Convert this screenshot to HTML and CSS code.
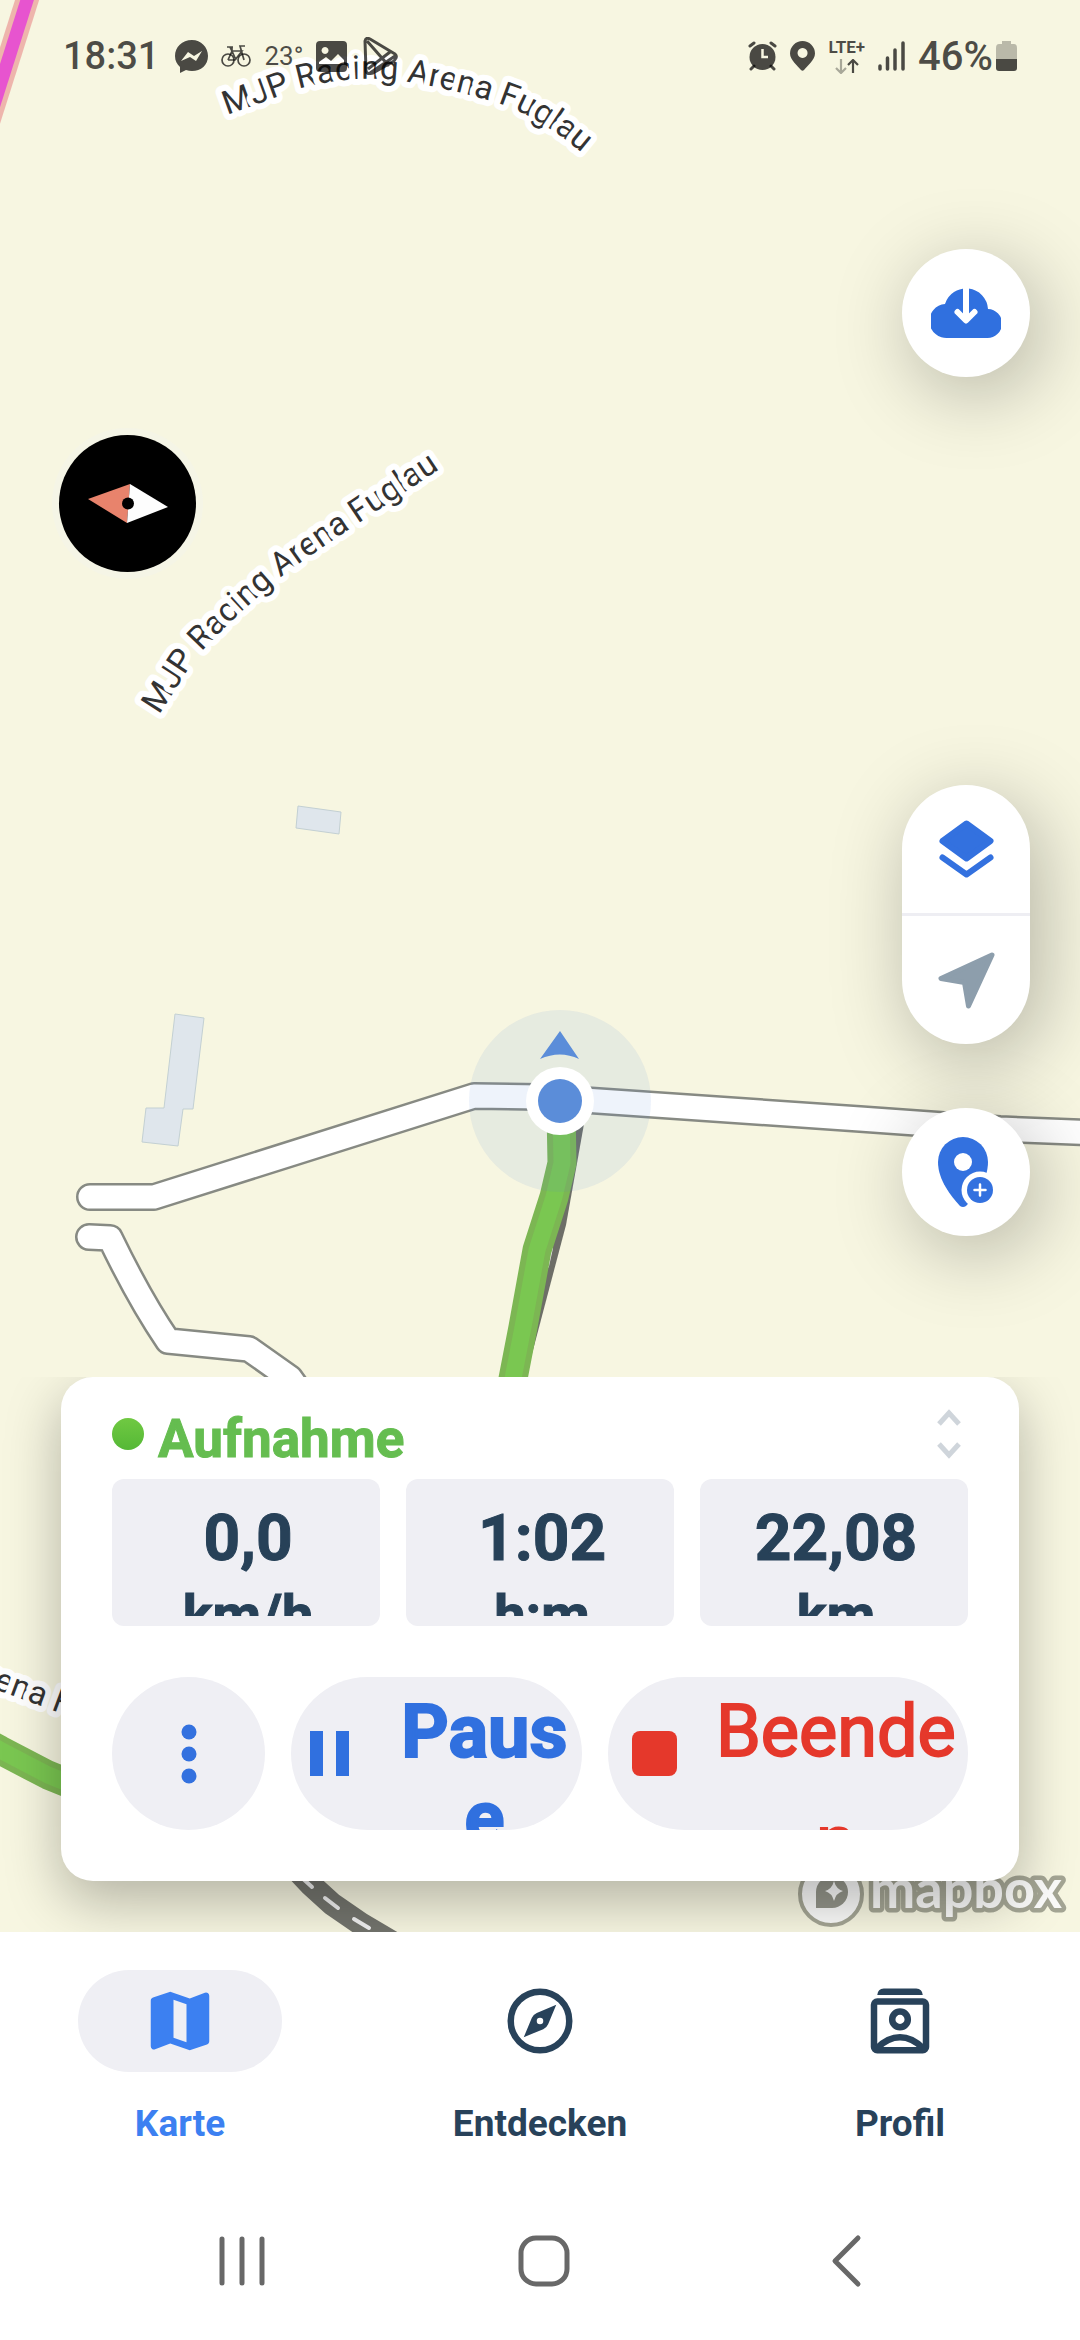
FILE: index.html
```html
<!DOCTYPE html>
<html lang="de">
<head>
    <meta charset="UTF-8">
    <meta name="viewport" content="width=device-width, initial-scale=1.0">
    <title>Karte</title>
    <link rel="stylesheet" href="styles.css">
</head>
<body>
    <div class="app">
        <main class="map">
            <svg class="map-canvas" viewBox="0 0 1080 1932" preserveAspectRatio="xMidYMin slice">
                <defs>
                    <path id="label-top" d="M227 115L302 88Q350 75 397 80Q448 88 494 102Q540 115 590 160"/>
                    <path id="label-mid" d="M159 715L186 673Q193 661 204 649Q240 611 281 577Q320 548 362 521L450 462"/>
                    <path id="label-low" d="M-38 1677L57 1712L200 1765"/>
                </defs>

                <!-- route in the corner -->
                <path class="route-glow" d="M34 -22L-14 130"/>
                <path class="route" d="M34 -22L-14 130"/>

                <!-- buildings -->
                <path class="building" d="M298 806L341 812L339 834L296 828Z"/>
                <path class="building" d="M175 1014L204 1018L193 1109H183L178 1146L142 1142L146 1108H164Z"/>

                <!-- roads -->
                <path class="road-case" d="M90 1197H154L474 1096L540 1097L860 1119L1000 1129L1100 1133"/>
                <path class="road" d="M90 1197H154L474 1096L540 1097L860 1119L1000 1129L1100 1133"/>
                <path class="road-case" d="M89 1237L110 1238Q140 1300 168 1341L249 1349L290 1378L320 1420"/>
                <path class="road" d="M89 1237L110 1238Q140 1300 168 1341L249 1349L290 1378L320 1420"/>
                <path class="track-dark" d="M584 1124L566 1225L537 1335L525 1380H500L560 1120Z"/>
                <path class="track-dash" d="M557 1226L555 1232M551 1248L547 1266"/>
                <path class="rail" d="M280 1852L310 1884L332 1904L361 1924L395 1944"/>
                <path class="rail-dash" d="M300 1876L312 1887M325 1898L338 1908M354 1919L369 1928"/>

                <!-- recorded track -->
                <path class="track-edge" d="M561 1110L562 1163L554 1197L537 1250L523 1327L505 1420"/>
                <path class="track" d="M561 1110L562 1163L554 1197L537 1250L523 1327L505 1420"/>
                <path class="track-edge" d="M-20 1739L0 1750L48 1775L90 1792"/>
                <path class="track" d="M-20 1739L0 1750L48 1775L90 1792"/>

                <text class="map-label"><textPath href="#label-top">MJP Racing Arena Fuglau</textPath></text>
                <text class="map-label"><textPath href="#label-mid">MJP Racing Arena Fuglau</textPath></text>
                <text class="map-label"><textPath href="#label-low">Arena Fuglau</textPath></text>

                <!-- own position -->
                <circle cx="560" cy="1101" r="91" fill="#5b8dd9" opacity=".1"/>
                <path d="M560 1031L579 1059Q560 1050 540 1059Z" fill="#5b8dd9"/>
                <circle cx="560" cy="1101" r="34" fill="#fff"/>
                <circle cx="560" cy="1101" r="22" fill="#5b8dd9"/>

                <!-- map logo -->
                <g class="logo">
                    <circle cx="831" cy="1894" r="31" fill="#fbfbfa" stroke="#a4a594" stroke-width="4"/>
                    <path d="M816 1908V1892A16 16 0 1 1 832 1908Z" fill="#94958a"/>
                    <path d="M834 1881Q836 1889 843 1891Q836 1893 834 1901Q832 1893 825 1891Q832 1889 834 1881Z" fill="#fbfbfa"/>
                    <text class="logo-text" x="870" y="1908">mapbox</text>
                </g>
            </svg>

            <div class="overlay">
                <header class="status">
                    <div class="status-group">
                        <span class="clock">18:31</span>
                        <svg width="33" height="33" viewBox="0 0 33 33"><path fill="currentColor" fill-rule="evenodd" d="M17 0C7 0 0 7 0 16c0 5 2 8 5 11v6l6-3c2 .6 4 1 6 1 9 0 16-6 16-15S26 0 17 0zM6 21l7-9 6 4 8-5-6 10-6-4z"/></svg>
                        <svg width="30" height="22" viewBox="0 0 30 22" fill="none" stroke="currentColor" stroke-width="1.7"><circle cx="7" cy="15" r="6"/><circle cx="23" cy="15" r="6"/><path d="M7 15L11 6H21L14 15H7M6 2H12M11 2V6L15 15M23 15L19 1H24M11 6L9 2"/></svg>
                        <span class="temperature">23°</span>
                        <svg width="31" height="31" viewBox="0 0 31 31"><path fill="currentColor" fill-rule="evenodd" d="M4 0H27Q31 0 31 4V27Q31 31 27 31H4Q0 31 0 27V4Q0 0 4 0ZM9 6a3.500 3.500 0 1 0 .1 0zM3 23H28V19L22 13L15 20L10 16L3 21z"/></svg>
                        <svg width="38" height="38" viewBox="0 0 38 38" fill="none" stroke="currentColor" stroke-width="3" stroke-linejoin="round"><path d="M5 4Q6 0 10 2L35 17Q37 19 36 21L34 24L13 36Q6 38 6 33ZM7 4L29 29M35 19L10 36M30 15L8 32"/></svg>
                    </div>
                    <div class="status-group">
                        <svg width="29" height="30" viewBox="0 0 29 30"><path fill="none" stroke="currentColor" stroke-width="3" stroke-linecap="round" d="M2 5L6 2M27 5L23 2M3 28L6 25M26 28L23 25"/><circle cx="14.500" cy="16" r="13" fill="currentColor"/><path d="M14.500 8V16H20" fill="none" stroke="#f7f6e1" stroke-width="2.500"/></svg>
                        <svg width="25" height="30" viewBox="0 0 25 30"><path fill="currentColor" fill-rule="evenodd" d="M12.500 0A12.500 12.500 0 0 0 0 12.500C0 19 8 25 11 29q1.500 1.500 3 0C17 25 25 19 25 12.500A12.500 12.500 0 0 0 12.500 0zM12.500 7a5 5 0 1 0 .1 0z"/></svg>
                        <span class="network">
                            <span>LTE+</span>
                            <svg width="24" height="15" viewBox="0 0 24 15" fill="none" stroke="currentColor" stroke-width="2.200"><path opacity=".45" d="M6 0V13M1 9L6 14L11 9"/><path d="M18 14V1M13 6L18 1L23 6"/></svg>
                        </span>
                        <svg width="27" height="30" viewBox="0 0 27 30" stroke="currentColor" stroke-width="3.500" stroke-linecap="round"><path d="M2 25V28M9.500 17V28M17 9V28M25 2V28"/></svg>
                        <span class="battery">
                            <span class="percent">46%</span>
                            <svg width="21" height="30" viewBox="0 0 21 30" fill="currentColor"><path opacity=".35" d="M6 0H15V3H18Q21 3 21 7V18H0V7Q0 3 3 3H6z"/><path d="M0 18H21V27Q21 30 18 30H3Q0 30 0 27z"/></svg>
                        </span>
                    </div>
                </header>

                <div class="tools">
                    <button type="button" class="compass" aria-label="Kompass">
                        <svg width="80" height="40" viewBox="0 0 80 40"><path fill="#e8836c" d="M0 15L42 0L39 39z"/><path fill="#fdfdfd" d="M42 0L80 23L39 39z"/><circle cx="40" cy="19.500" r="6"/></svg>
                    </button>
                    <div class="tool-column">
                        <button type="button" class="round-button download" aria-label="Offline speichern">
                            <svg width="70" height="52" viewBox="0 0 70 52"><path fill="#3070df" d="M17 51A17 17 0 0 1 14 17A22 22 0 0 1 57 22A14.500 14.500 0 0 1 56 51z"/><path fill="none" stroke="#fff" stroke-width="6" d="M35 -2V32"/><path fill="none" stroke="#fff" stroke-width="6" stroke-linecap="round" stroke-linejoin="round" d="M26.500 25L35 33.500L43.500 25"/></svg>
                        </button>
                        <div class="pill">
                            <button type="button" class="pill-button" aria-label="Ebenen">
                                <svg width="55" height="58" viewBox="0 0 55 58"><path fill="#3371df" stroke="#3371df" stroke-width="6" stroke-linejoin="round" d="M27.500 3.500L51.500 21L27.500 38.500L3.500 21z"/><path fill="none" stroke="#3371df" stroke-width="6" stroke-linecap="round" stroke-linejoin="round" d="M3.500 37.500L27.500 54.500L51.500 37.500"/></svg>
                            </button>
                            <button type="button" class="pill-button" aria-label="Position">
                                <svg width="57" height="57" viewBox="0 0 57 57"><path fill="#8d9eac" stroke="#8d9eac" stroke-width="5" stroke-linejoin="round" d="M54 3L3 26.500L26.500 30.500L30.500 54z"/></svg>
                            </button>
                        </div>
                        <button type="button" class="round-button" aria-label="Wegpunkt setzen">
                            <svg width="56" height="70" viewBox="0 0 56 70"><path fill="#3371df" d="M25 0A25 25 0 0 0 0 25C0 43 13 59 22 69q3 2 6 0C38 58 50 43 50 25A25 25 0 0 0 25 0z"/><circle cx="25" cy="25" r="9" fill="#fff"/><circle cx="42" cy="53" r="18.500" fill="#fff"/><circle cx="42" cy="53" r="13" fill="#3371df"/><path stroke="#fff" stroke-width="2.500" stroke-linecap="round" d="M42 47.500V58.500M36.500 53H47.500"/></svg>
                        </button>
                    </div>
                </div>

                <section class="recorder">
                    <div class="card">
                        <div class="card-head">
                            <span class="live-dot"></span>
                            <h1>Aufnahme</h1>
                            <button type="button" class="expand" aria-label="Ausklappen">
                                <svg width="26" height="50" viewBox="0 0 26 50" fill="none" stroke="#cfd5db" stroke-width="5"><path d="M3 15L13 4L23 15M3 35L13 46L23 35"/></svg>
                            </button>
                        </div>
                        <div class="stats">
                            <div class="stat"><div class="stat-text"><div class="value">0,0</div><div class="unit">km/h</div></div></div>
                            <div class="stat"><div class="stat-text"><div class="value">1:02</div><div class="unit">h:m</div></div></div>
                            <div class="stat"><div class="stat-text"><div class="value">22,08</div><div class="unit">km</div></div></div>
                        </div>
                        <div class="actions">
                            <button type="button" class="action more" aria-label="Mehr">
                                <svg width="16" height="60" viewBox="0 0 16 60" fill="#3371df"><circle cx="8" cy="8" r="7.500"/><circle cx="8" cy="30" r="7.500"/><circle cx="8" cy="52" r="7.500"/></svg>
                            </button>
                            <button type="button" class="action pause">
                                <svg width="39" height="45" viewBox="0 0 39 45" fill="#3070df"><path d="M0 0H13V45H0zM26 0H39V45H26z"/></svg>
                                <span>Pause</span>
                            </button>
                            <button type="button" class="action stop">
                                <svg width="45" height="45" viewBox="0 0 45 45" fill="#e5382b"><rect width="45" height="45" rx="8"/></svg>
                                <span>Beenden</span>
                            </button>
                        </div>
                    </div>
                </section>
            </div>
        </main>

        <nav class="tabs">
            <a href="#karte" class="tab active">
                <span class="tab-icon"><svg width="78" height="78" viewBox="0 0 24 24" fill="currentColor"><path d="m15 21-6-2.100-4.650 1.800q-.5.2-.925-.112Q3 20.275 3 19.750v-14q0-.325.188-.575.187-.25.512-.375L9 3l6 2.100 4.650-1.800q.5-.2.925.113.425.312.425.837v14q0 .325-.188.575-.187.25-.512.375Zm-1-2.450V6.850l-4-1.400v11.700Z"/></svg></span>
                Karte
            </a>
            <a href="#entdecken" class="tab">
                <span class="tab-icon"><svg width="78" height="78" viewBox="0 0 24 24"><circle cx="12" cy="12" r="9" fill="none" stroke="currentColor" stroke-width="2"/><path fill="currentColor" d="M17 7L11 9.500Q9.900 10 9.500 11L7 17L13 14.500Q14.100 14 14.500 13Z"/><circle cx="12" cy="12" r="1" fill="#fff"/></svg></span>
                Entdecken
            </a>
            <a href="#profil" class="tab">
                <span class="tab-icon"><svg width="78" height="78" viewBox="0 0 24 24"><path fill="currentColor" d="M5 4Q5.200 2 7 2H17Q18.800 2 19 4z"/><rect x="4" y="6" width="16" height="15" rx="1" fill="none" stroke="currentColor" stroke-width="2"/><circle cx="12" cy="11.500" r="2.400" fill="none" stroke="currentColor" stroke-width="2"/><path fill="none" stroke="currentColor" stroke-width="2" d="M5 20.300Q8.300 17 12 17T19 20.300"/></svg></span>
                Profil
            </a>
        </nav>

        <div class="system-bar">
            <button type="button" aria-label="Letzte Apps"><svg width="50" height="54" viewBox="0 0 50 54"><path d="M5 5V49M25 5V49M45 5V49"/></svg></button>
            <button type="button" aria-label="Startseite"><svg width="54" height="54" viewBox="0 0 54 54"><rect x="4" y="4" width="46" height="46" rx="15"/></svg></button>
            <button type="button" aria-label="Zurück"><svg width="34" height="54" viewBox="0 0 34 54"><path d="M29 4L6 27L29 50"/></svg></button>
        </div>
    </div>
</body>
</html>
```
FILE: styles.css
```css
* {
    box-sizing: border-box;
}

body {
    margin: 0;
    font-family: Roboto, "Liberation Sans", sans-serif;
    background-color: #fff;
    color: #28425a;
}

button {
    padding: 0;
    border: none;
    background: none;
    font-family: inherit;
    cursor: pointer;
}

svg {
    flex: none;
}

.app {
    display: flex;
    flex-direction: column;
    min-height: 100vh;
}

/* Map */
.map {
    position: relative;
    display: flex;
    flex: 1;
    overflow: hidden;
    background-color: #f7f6e1;
}

.map-canvas {
    position: absolute;
    inset: 0;
    width: 100%;
    height: 100%;
}

.map-canvas path {
    stroke-linejoin: round;
}

.route-glow {
    stroke: #eda6a0;
    stroke-width: 23;
    opacity: 0.8;
}

.route {
    stroke: #e754cf;
    stroke-width: 13;
}

.building {
    fill: #dfe6ec;
    stroke: #c3d0d3;
    stroke-width: 1;
}

.road-case,
.road,
.rail,
.rail-dash,
.track-edge,
.track,
.track-dash {
    fill: none;
    stroke-linecap: round;
}

.road-case {
    stroke: #878a83;
    stroke-width: 28;
}

.road {
    stroke: #fff;
    stroke-width: 23;
}

.track-dark {
    fill: #6d6e67;
}

.track-dash,
.rail-dash {
    stroke: #f0f0f0;
    stroke-width: 4;
}

.rail {
    stroke: #73746d;
    stroke-width: 23;
}

.track-edge {
    stroke: #7cb653;
    stroke-width: 29;
}

.track {
    stroke: #7ac751;
    stroke-width: 17;
}

.map-label {
    font-size: 33px;
    fill: #333;
    stroke: #fff;
    stroke-width: 12px;
    stroke-linejoin: round;
    paint-order: stroke;
}

.logo-text {
    font-family: Lato, sans-serif;
    font-size: 54px;
    font-weight: 700;
    fill: #fbfbfa;
    stroke: #a4a594;
    stroke-width: 9px;
    stroke-linejoin: round;
    paint-order: stroke;
}

.overlay {
    position: relative;
    display: flex;
    flex: 1;
    flex-direction: column;
}

/* Status bar */
.status {
    display: flex;
    justify-content: space-between;
    align-items: center;
    height: 112px;
    padding: 0 63px;
    color: rgba(0, 0, 0, 0.7);
}

.status-group {
    display: flex;
    align-items: center;
    gap: 13px;
}

.clock {
    margin-right: 3px;
    font-size: 38px;
    font-weight: 500;
}

.percent {
    margin-right: 3px;
    font-size: 40px;
    font-weight: 500;
}

.temperature {
    font-size: 26px;
}

.network {
    display: flex;
    flex-direction: column;
    align-items: center;
    gap: 4px;
    font-size: 17px;
    line-height: 16px;
    font-weight: 700;
}

.battery {
    display: flex;
    align-items: center;
}

/* Map buttons */
.tools {
    display: flex;
    justify-content: space-between;
    align-items: flex-start;
    padding: 137px 50px 0;
}

.compass {
    display: flex;
    justify-content: center;
    align-items: center;
    width: 137px;
    height: 137px;
    margin: 186px 9px 0;
    border-radius: 50%;
    background-color: #000;
    box-shadow: 0 0 0 7px #f5f5e6;
}

.tool-column {
    display: flex;
    flex-direction: column;
    gap: 64px;
}

.round-button,
.pill-button {
    display: flex;
    justify-content: center;
    align-items: center;
    width: 128px;
    height: 128px;
}

.round-button,
.pill {
    border-radius: 64px;
    background-color: #fff;
    box-shadow: 10px 16px 80px rgba(0, 0, 0, 0.28);
}

.download {
    margin-bottom: 344px;
}

.pill-button + .pill-button {
    height: 131px;
    border-top: 3px solid #eeeef3;
}

/* Recording card */
.recorder {
    margin-top: auto;
    padding: 0 61px 51px;
    overflow: hidden;
}

.card {
    padding: 26px 51px 51px;
    border-radius: 32px;
    background-color: #fff;
    box-shadow: 0 20px 56px rgba(0, 0, 0, 0.28);
}

.card-head {
    display: flex;
    align-items: center;
    height: 72px;
    margin-bottom: 4px;
}

.live-dot {
    width: 32px;
    height: 32px;
    margin: 0 14px 10px 0;
    border-radius: 50%;
    background: linear-gradient(#70c942, #55b836);
}

h1 {
    margin: 0;
    color: #65bd50;
    font-size: 53px;
    font-weight: 700;
    line-height: 64px;
    -webkit-text-stroke: 1px currentColor;
}

.expand {
    margin: 0 6px 10px auto;
}

.expand svg {
    display: block;
}

.stats {
    display: grid;
    grid-template-columns: repeat(3, 1fr);
    gap: 26px;
}

/* the unit line is cut off by the tile */
.stat {
    height: 147px;
    padding: 22px 8px 10px 12px;
    border-radius: 12px;
    background-color: #efeff4;
    color: #274158;
    font-weight: 700;
    text-align: center;
    -webkit-text-stroke: 1px currentColor;
}

.stat-text {
    height: 100%;
    overflow: hidden;
}

.value {
    font-size: 64px;
    line-height: 76px;
}

.unit {
    font-size: 56px;
    line-height: 76px;
}

.actions {
    display: flex;
    gap: 26px;
    margin-top: 51px;
}

.action {
    display: flex;
    align-items: center;
    height: 153px;
    border-radius: 77px;
    background-color: #efeff4;
    overflow: hidden;
}

.action span {
    flex: 1;
    align-self: flex-start;
    min-width: 0;
    text-align: center;
    overflow-wrap: anywhere;
}

.more {
    flex: none;
    justify-content: center;
    width: 153px;
}

.pause {
    flex: 290 1 0;
    gap: 46px;
    padding: 0 8px 0 19px;
    color: #3070df;
    font-size: 74px;
    font-weight: 700;
    line-height: 86px;
    -webkit-text-stroke: 2px currentColor;
}

.pause span {
    padding-top: 12px;
}

.stop {
    flex: 361 1 0;
    gap: 35px;
    padding: 0 8px 0 24px;
    color: #e5382b;
    font-size: 72px;
    line-height: 110px;
    -webkit-text-stroke: 2px currentColor;
}

/* Bottom navigation */
.tabs {
    display: grid;
    grid-template-columns: repeat(3, 1fr);
    padding: 38px 0 44px;
}

.tab {
    display: flex;
    flex-direction: column;
    align-items: center;
    gap: 30px;
    color: #28425a;
    font-size: 37px;
    font-weight: 700;
    line-height: 44px;
    text-decoration: none;
}

.tab-icon {
    display: flex;
    justify-content: center;
    align-items: center;
    width: 204px;
    height: 102px;
    border-radius: 51px;
}

.active {
    color: #3c80f1;
}

.active .tab-icon {
    background-color: #efeff4;
}

.system-bar {
    display: flex;
    justify-content: center;
    align-items: center;
    gap: 182px;
    height: 150px;
    padding: 0 0 6px 8px;
}

.system-bar button {
    width: 120px;
    height: 96px;
}

.system-bar svg {
    fill: none;
    stroke: #686868;
    stroke-width: 5;
    stroke-linecap: round;
    stroke-linejoin: round;
}
```
